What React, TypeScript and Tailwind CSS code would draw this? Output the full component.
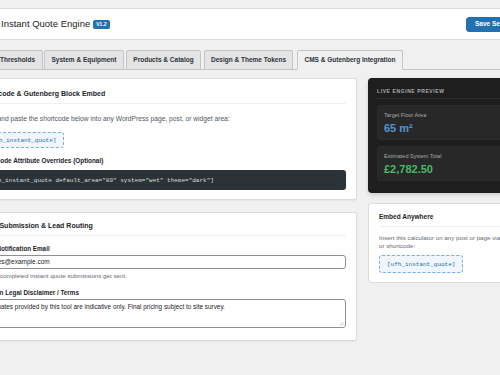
import React from "react";

const tabs = [
  { label: "Thresholds", cls: "w-[51px]" },
  { label: "System & Equipment", cls: "ml-[1px] w-[80px]" },
  { label: "Products & Catalog", cls: "ml-[2px] w-[75px]" },
  { label: "Design & Theme Tokens", cls: "ml-[3px] w-[89px]" },
  { label: "CMS & Gutenberg Integration", cls: "ml-[4px] w-[106px]", active: true },
];

function Shortcode({ text }: { text: string }) {
  return (
    <span className="inline-flex items-center rounded-[3px] border border-dashed border-[#72aee6] bg-[#f0f6fc] px-[7px] font-['Liberation_Mono',monospace] text-[6px] text-[#2271b1]">
      {text}
    </span>
  );
}

function Card({ title, children, className }: { title: string; children: React.ReactNode; className?: string }) {
  return (
    <section className={"rounded-[3px] border border-[#dcdcde] bg-white px-[10px] shadow-[0_1px_1px_rgba(0,0,0,0.04)] " + (className ?? "")}>
      <h2 className="border-b border-[#f0f0f1] pb-[4px] text-[7px] font-bold leading-[10px] text-[#1d2327]">{title}</h2>
      {children}
    </section>
  );
}

function Stat({ label, value, tone }: { label: string; value: React.ReactNode; tone: string }) {
  return (
    <div className="mt-[6px] h-[35px] rounded-[3px] border border-[#2c2c2c] bg-[#282828] pl-[6px] pt-[6px]">
      <div className="text-[5.5px] leading-[7px] text-[#a7aaad]">{label}</div>
      <div className={"mt-[3px] text-[11px] font-bold leading-[12px] " + tone}>{value}</div>
    </div>
  );
}

export default function App() {
  return (
    <div className="h-[375px] w-[500px] overflow-hidden bg-[#f0f0f1] font-['Liberation_Sans',Arial,sans-serif] text-[#1d2327]">
      {/* top bar */}
      <header className="mt-[8px] flex h-[32px] items-center border-y border-[#dcdcde] bg-white">
        <div className="flex w-[466px] shrink-0 items-center gap-[3px] pl-[1px]">
          <h1 className="text-[9.5px] font-medium leading-none text-[#1d2327]">Instant Quote Engine</h1>
          <span className="rounded-[2px] bg-[#2271b1] px-[3px] py-[2px] text-[5px] font-bold leading-[5px] text-white">V1.2</span>
        </div>
        <button
          type="button"
          className="h-[15px] shrink-0 rounded-[3px] border border-[#2271b1] bg-[#2271b1] px-[8px] text-[6.5px] font-semibold leading-none text-white"
        >
          Save Settings
        </button>
      </header>

      {/* tabs */}
      <nav className="ml-[-8px] mt-[10px] flex w-[620px] items-end border-b border-[#c3c4c7]">
        {tabs.map((t) => (
          <div
            key={t.label}
            className={
              "-mb-px flex h-[20px] shrink-0 items-center justify-center rounded-t-[2px] border text-[6.5px] font-bold text-[#2c3338] " +
              t.cls +
              (t.active ? " border-[#c3c4c7] border-b-[#f0f0f1] bg-[#f0f0f1]" : " border-[#c3c4c7] bg-[#e4e4e5]")
            }
          >
            {t.label}
          </div>
        ))}
      </nav>

      {/* body */}
      <div className="ml-[-31px] mt-[8px] flex items-start gap-[11px]">
        <div className="flex w-[388px] shrink-0 flex-col gap-[12px]">
          <Card title="Shortcode & Gutenberg Block Embed" className="pb-[9px] pt-[10px]">
            <p className="mt-[10px] text-[6.7px] leading-[9px] text-[#50575e]">
              Copy and paste the shortcode below into any WordPress page, post, or widget area:
            </p>
            <div className="mt-[9px] flex h-[16px]">
              <Shortcode text="[ufh_instant_quote]" />
            </div>
            <div className="mt-[8px] text-[6.4px] font-semibold leading-[10px]">Shortcode Attribute Overrides (Optional)</div>
            <div className="mt-[4px] flex h-[20px] items-center rounded-[3px] bg-[#2c3338] px-[7px] font-['Liberation_Mono',monospace] text-[6px] text-[#dcdcde]">
              [ufh_instant_quote default_area="80" system="wet" theme="dark"]
            </div>
          </Card>

          <Card title="Form Submission & Lead Routing" className="pb-[12px] pt-[8px]">
            <div className="mt-[8px] text-[6.3px] font-semibold leading-[10px]">Lead Notification Email</div>
            <div className="mt-[1px] flex h-[14px] items-center rounded-[3px] border border-[#8c8f94] px-[4px] text-[6.5px]">
              quotes@example.com
            </div>
            <p className="mt-[3px] text-[6.2px] leading-[8px] text-[#646970]">
              Where completed instant quote submissions get sent.
            </p>
            <div className="mt-[8px] text-[6.3px] font-semibold leading-[10px]">Caption Legal Disclaimer / Terms</div>
            <div className="relative mt-[1px] h-[29px] rounded-[3px] border border-[#8c8f94] px-[4px] pt-[3px] text-[6.4px] leading-[8px]">
              Estimates provided by this tool are indicative only. Final pricing subject to site survey.
              <svg className="absolute bottom-[1px] right-[1px]" width="5" height="5" viewBox="0 0 5 5">
                <path d="M4.5 1L1 4.5M4.5 3L3 4.5" stroke="#a7aaad" strokeWidth="0.7" />
              </svg>
            </div>
          </Card>
        </div>

        <aside className="flex w-[200px] shrink-0 flex-col gap-[10px]">
          <div className="rounded-[4px] bg-[#1e1e1e] px-[9px] pb-[12px] pt-[9px] shadow-[0_2px_4px_rgba(0,0,0,0.15)]">
            <div className="border-b border-[#2f2f2f] pb-[3px] text-[5px] font-bold uppercase leading-[8px] tracking-[0.6px] text-[#a7aaad]">
              Live Engine Preview
            </div>
            <Stat label="Target Floor Area" value={<>65 m²</>} tone="text-[#4f94d4]" />
            <Stat label="Estimated System Total" value="£2,782.50" tone="text-[#4ab866]" />
          </div>

          <div className="rounded-[3px] border border-[#dcdcde] bg-white px-[10px] pb-[9px] pt-[8px]">
            <h3 className="border-b border-[#f0f0f1] pb-[4px] text-[6.5px] font-bold leading-[10px]">Embed Anywhere</h3>
            <p className="mt-[7px] whitespace-nowrap text-[6.2px] leading-[8px] text-[#646970]">
              Insert this calculator on any post or page via the Gutenberg block
              <br />
              or shortcode:
            </p>
            <div className="mt-[5px] flex h-[18px]">
              <Shortcode text="[ufh_instant_quote]" />
            </div>
          </div>
        </aside>
      </div>
    </div>
  );
}
